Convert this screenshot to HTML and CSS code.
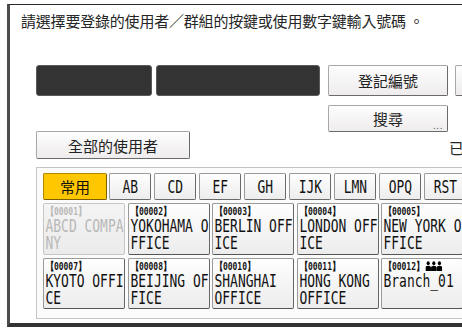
FILE: index.html
```html
<!DOCTYPE html>
<html>
<head>
<meta charset="utf-8">
<link rel="stylesheet" href="styles.css">
</head>
<body>
<div class="frame">
  <div class="title">請選擇要登錄的使用者／群組的按鍵或使用數字鍵輸入號碼 。</div>
  <div class="row-a">
    <div class="dark d1"></div>
    <div class="dark d2"></div>
    <div class="btn b-reg">登記編號</div>
    <div class="btn b-more"></div>
  </div>
  <div class="row-b">
    <div class="btn b-search">搜尋<span class="dots">...</span></div>
  </div>
  <div class="row-c">
    <div class="btn b-all">全部的使用者</div>
    <div class="status">已</div>
  </div>
  <div class="panel">
    <div class="tabs">
      <div class="tab active">常用</div>
      <div class="tab"><span class="nar">AB</span></div>
      <div class="tab"><span class="nar">CD</span></div>
      <div class="tab"><span class="nar">EF</span></div>
      <div class="tab"><span class="nar">GH</span></div>
      <div class="tab"><span class="nar">IJK</span></div>
      <div class="tab"><span class="nar">LMN</span></div>
      <div class="tab"><span class="nar">OPQ</span></div>
      <div class="tab"><span class="nar">RST</span></div>
    </div>
    <div class="cards">
      <div class="card disabled"><div class="cbody"><div class="lbl">【00001】</div><div class="nm">ABCD COMPA<br>NY</div></div></div>
      <div class="card"><div class="cbody"><div class="lbl">【00002】</div><div class="nm">YOKOHAMA O<br>FFICE</div></div></div>
      <div class="card"><div class="cbody"><div class="lbl">【00003】</div><div class="nm">BERLIN OFF<br>ICE</div></div></div>
      <div class="card"><div class="cbody"><div class="lbl">【00004】</div><div class="nm">LONDON OFF<br>ICE</div></div></div>
      <div class="card"><div class="cbody"><div class="lbl">【00005】</div><div class="nm">NEW YORK O<br>FFICE</div></div></div>
      <div class="card"><div class="cbody"><div class="lbl">【00007】</div><div class="nm">KYOTO OFFI<br>CE</div></div></div>
      <div class="card"><div class="cbody"><div class="lbl">【00008】</div><div class="nm">BEIJING OF<br>FICE</div></div></div>
      <div class="card"><div class="cbody"><div class="lbl">【00010】</div><div class="nm">SHANGHAI<br>OFFICE</div></div></div>
      <div class="card"><div class="cbody"><div class="lbl">【00011】</div><div class="nm">HONG KONG<br>OFFICE</div></div></div>
      <div class="card"><div class="cbody"><div class="lbl">【00012】<svg class="grp" width="22" height="10" viewBox="0 0 20 9"><g fill="#000"><circle cx="3.3" cy="2" r="1.9"/><path d="M0 9V6.2Q0 4.2 3.3 4.2Q6.6 4.2 6.6 6.2V9Z"/><circle cx="10" cy="2" r="1.9"/><path d="M6.7 9V6.2Q6.7 4.2 10 4.2Q13.3 4.2 13.3 6.2V9Z"/><circle cx="16.7" cy="2" r="1.9"/><path d="M13.4 9V6.2Q13.4 4.2 16.7 4.2Q20 4.2 20 6.2V9Z"/></g></svg></div><div class="nm">Branch_01</div></div></div>
    </div>
  </div>
</div>
</body>
</html>
```

FILE: styles.css
```css
html, body {
  margin: 0;
  padding: 0;
}
body {
  width: 462px;
  height: 329px;
  overflow: hidden;
  background: #fff;
  font-family: "Noto Sans CJK TC", "Noto Sans CJK JP", sans-serif;
  color: #1a1a1a;
}
.frame {
  margin: 4px 0 0 7px;
  width: 540px;
  height: 318px;
  border-top: 1px solid #2a2a2a;
  border-left: 3px solid #4d4d4d;
  border-bottom: 4px solid #333;
}
.title {
  padding: 6px 0 0 11px;
  font-size: 15px;
  line-height: 20px;
  white-space: nowrap;
  letter-spacing: -0.2px;
  color: #262626;
}
.row-a {
  display: flex;
  margin-top: 34px;
  padding-left: 26px;
  height: 31px;
}
.dark {
  box-sizing: border-box;
  height: 31px;
  background: #333;
  border: 1px solid #5a5a5a;
  border-radius: 3px;
}
.d1 { width: 116px; margin-right: 4px; }
.d2 { width: 164px; margin-right: 8px; }
.btn {
  box-sizing: border-box;
  display: flex;
  align-items: center;
  justify-content: center;
  background: linear-gradient(#fefdfd, #eeecec);
  border: 1px solid #a8a8a8;
  border-right-color: #6a6a6a;
  border-bottom-color: #6a6a6a;
  border-radius: 2px;
  font-size: 15px;
  color: #222;
}
.b-reg { width: 120px; height: 31px; margin-right: 7px; }
.b-more { width: 60px; height: 31px; }
.row-b {
  margin-top: 9px;
  padding-left: 318px;
  height: 26px;
}
.b-search {
  position: relative;
  width: 120px;
  height: 27px;
}
.dots {
  position: absolute;
  right: 4px;
  bottom: 2px;
  font-size: 9px;
  line-height: 6px;
  color: #555;
  font-family: "DejaVu Sans", sans-serif;
  letter-spacing: 0.5px;
}
.row-c {
  display: flex;
  align-items: flex-end;
  padding-left: 26px;
  height: 28px;
}
.b-all { width: 154px; height: 28px; }
.status {
  margin-left: 259px;
  font-size: 15px;
  line-height: 20px;
  margin-bottom: 1px;
  color: #262626;
}
.panel {
  box-sizing: border-box;
  margin: 8px 0 0 26px;
  height: 152px;
  border: 1px solid #c4c4c4;
  border-right: none;
  background: #fbfbfb;
  padding: 5px 0 0 6px;
}
.tabs {
  display: flex;
  gap: 3px;
  height: 27px;
}
.tab {
  box-sizing: border-box;
  width: 42px;
  height: 27px;
  flex: none;
  display: flex;
  align-items: center;
  justify-content: center;
  background: linear-gradient(#fefefe, #ededed);
  border: 1px solid #9a9a9a;
  border-right-color: #6a6a6a;
  border-bottom-color: #6a6a6a;
  border-radius: 2px;
  font-family: "DejaVu Sans Mono", monospace;
  font-size: 17px;
  color: #111;
}
.tab.active {
  width: 64px;
  margin-right: -1px;
  background: #ffc700;
  border-color: #b08a00;
  border-right-color: #7a5f00;
  border-bottom-color: #7a5f00;
  font-family: "Noto Sans CJK TC", sans-serif;
  font-size: 15px;
}
.nar {
  display: inline-block;
  transform: scaleX(0.76);
}
.cards {
  display: grid;
  grid-template-columns: repeat(5, 82px);
  grid-auto-rows: 52px 51px;
  column-gap: 2.5px;
  row-gap: 3px;
  margin-top: 3px;
}
.card {
  box-sizing: border-box;
  overflow: hidden;
  background: linear-gradient(#fefefe, #ececec);
  border: 1px solid #9a9a9a;
  border-right-color: #666;
  border-bottom-color: #555;
  border-radius: 2px;
  color: #111;
}
.card.disabled {
  background: linear-gradient(#f4f4f4, #ebebeb);
  border-color: #c6c6c6;
  color: #b8b8b8;
}
.cbody {
  width: 131%;
  padding: 0 0 0 2px;
  transform: scaleX(0.762);
  transform-origin: 0 0;
  font-family: "DejaVu Sans Mono", monospace;
  white-space: nowrap;
}
.lbl {
  font-size: 10.5px;
  font-weight: bold;
  line-height: 13px;
  height: 13px;
  display: flex;
  align-items: center;
  padding-top: 1px;
  box-sizing: border-box;
}
.grp {
  display: block;
  margin-left: 1px;
}
.nm {
  font-size: 17px;
  line-height: 17px;
  padding-top: 1px;
}
```
